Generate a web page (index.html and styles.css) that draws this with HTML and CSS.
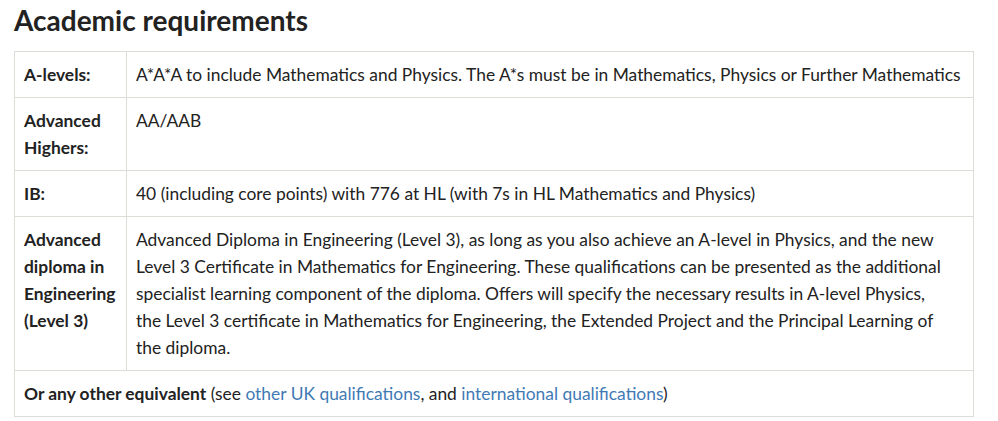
FILE: index.html
```html
<!DOCTYPE html>
<html lang="en">
<head>
    <meta charset="UTF-8">
    <title>Academic requirements</title>
    <link rel="stylesheet" href="styles.css">
</head>
<body>
    <div class="requisitos">
        <h2>Academic requirements</h2>
        <table>
            <tbody>
                <tr>
                    <th>A-levels:</th>
                    <td>A*A*A to include Mathematics and Physics. The A*s must be in Mathematics, Physics or Further Mathematics</td>
                </tr>
                <tr>
                    <th>Advanced Highers:</th>
                    <td>AA/AAB</td>
                </tr>
                <tr>
                    <th>IB:</th>
                    <td>40 (including core points) with 776 at HL (with 7s in HL Mathematics and Physics)</td>
                </tr>
                <tr>
                    <th>Advanced diploma in Engineering (Level 3)</th>
                    <td>Advanced Diploma in Engineering (Level 3), as long as you also achieve an A-level in Physics, and the new Level 3 Certificate in Mathematics for Engineering. These qualifications can be presented as the additional specialist learning component of the diploma. Offers will specify the necessary results in A-level Physics, the&nbsp;Level 3 certificate in Mathematics for Engineering, the Extended Project and the Principal Learning of the&nbsp;diploma.</td>
                </tr>
                <tr>
                    <td colspan="2"><strong>Or any other equivalent</strong> (see <a href="#">other UK qualifications</a>, and <a href="#">international qualifications</a>)</td>
                </tr>
            </tbody>
        </table>
    </div>
</body>
</html>
```

FILE: styles.css
```css
body {
    font-family: Lato, "Open Sans", sans-serif;
    font-size: 17.4px;
    line-height: 27px;
    color: #222;
    background-color: #fff;
    margin: 0;
}
.requisitos {
    padding: 0 24px 0 14px;
}
h2 {
    font-size: 28px;
    line-height: 36px;
    font-weight: bold;
    color: #222;
    margin: 2px 0 13px 0;
}
table {
    width: 100%;
    border-collapse: collapse;
}
th, td {
    border: 1px solid #dddcd7;
    padding: 9px 9px;
    text-align: left;
    vertical-align: top;
}
th {
    width: 93px;
    font-weight: bold;
}
a {
    color: #3f7ab5;
    text-decoration: none;
}
```
